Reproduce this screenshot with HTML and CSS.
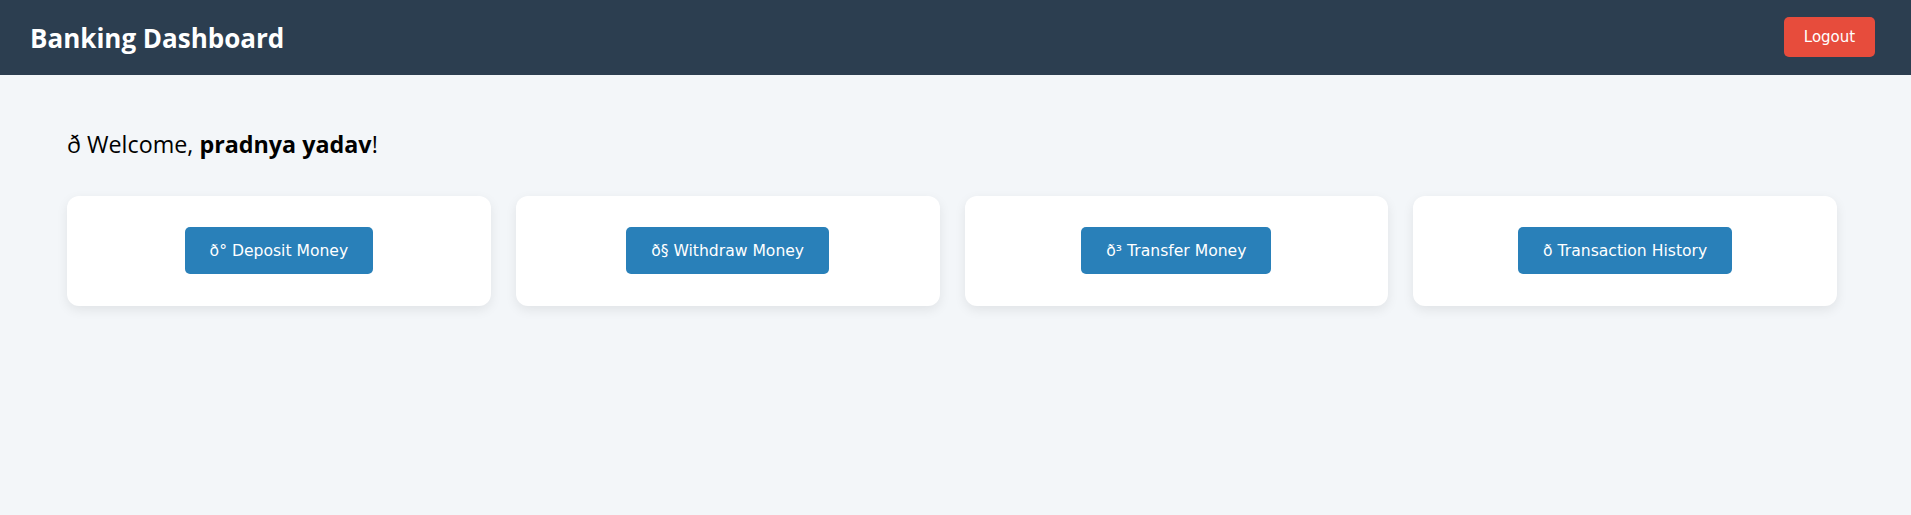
FILE: index.html
```html
<!DOCTYPE html>
<html lang="en">
<head>
<meta charset="utf-8">
<title>Banking Dashboard</title>
<link rel="stylesheet" href="styles.css">
</head>
<body>
<header class="topbar">
  <h1 class="brand">Banking Dashboard</h1>
  <button class="logout">Logout</button>
</header>
<main class="content">
  <p class="welcome">ð Welcome, <strong>pradnya yadav</strong>!</p>
  <section class="cards">
    <div class="card"><button class="action">ð° Deposit Money</button></div>
    <div class="card"><button class="action">ð§ Withdraw Money</button></div>
    <div class="card"><button class="action">ð³ Transfer Money</button></div>
    <div class="card"><button class="action">ð Transaction History</button></div>
  </section>
</main>
</body>
</html>
```
FILE: styles.css
```css
* { box-sizing: border-box; }
html, body { margin: 0; padding: 0; }
body {
  background: #f3f6f9;
  font-family: "Open Sans", "DejaVu Sans", sans-serif;
  color: #000;
  height: 515px;
}
.topbar {
  height: 75px;
  background: #2c3e50;
  display: flex;
  align-items: center;
  justify-content: space-between;
  padding: 0 36px 0 30px;
}
.brand {
  margin: 0;
  color: #fff;
  font-size: 26px;
  font-weight: 700;
}
.logout {
  width: 91px;
  height: 40px;
  background: #e74c3c;
  color: #fff;
  border: none;
  border-radius: 5px;
  font-family: "DejaVu Sans", sans-serif;
  font-size: 15px;
  margin-top: -1px;
}
.content {
  padding: 0 74px 0 67px;
}
.welcome {
  margin: 0;
  padding-top: 54px;
  font-size: 23.3px;
  line-height: 30px;
}
.cards {
  margin-top: 37px;
  display: grid;
  grid-template-columns: repeat(4, 1fr);
  gap: 25px;
}
.card {
  height: 110px;
  background: #fff;
  border-radius: 12px;
  box-shadow: 0 4px 12px rgba(0, 0, 0, 0.08);
  display: flex;
  align-items: center;
  justify-content: center;
}
.action {
  height: 47px;
  padding: 0 25px;
  background: #2980b9;
  color: #fff;
  border: none;
  border-radius: 5px;
  font-family: "DejaVu Sans", sans-serif;
  font-size: 15.6px;
  margin-top: -1px;
}
```
